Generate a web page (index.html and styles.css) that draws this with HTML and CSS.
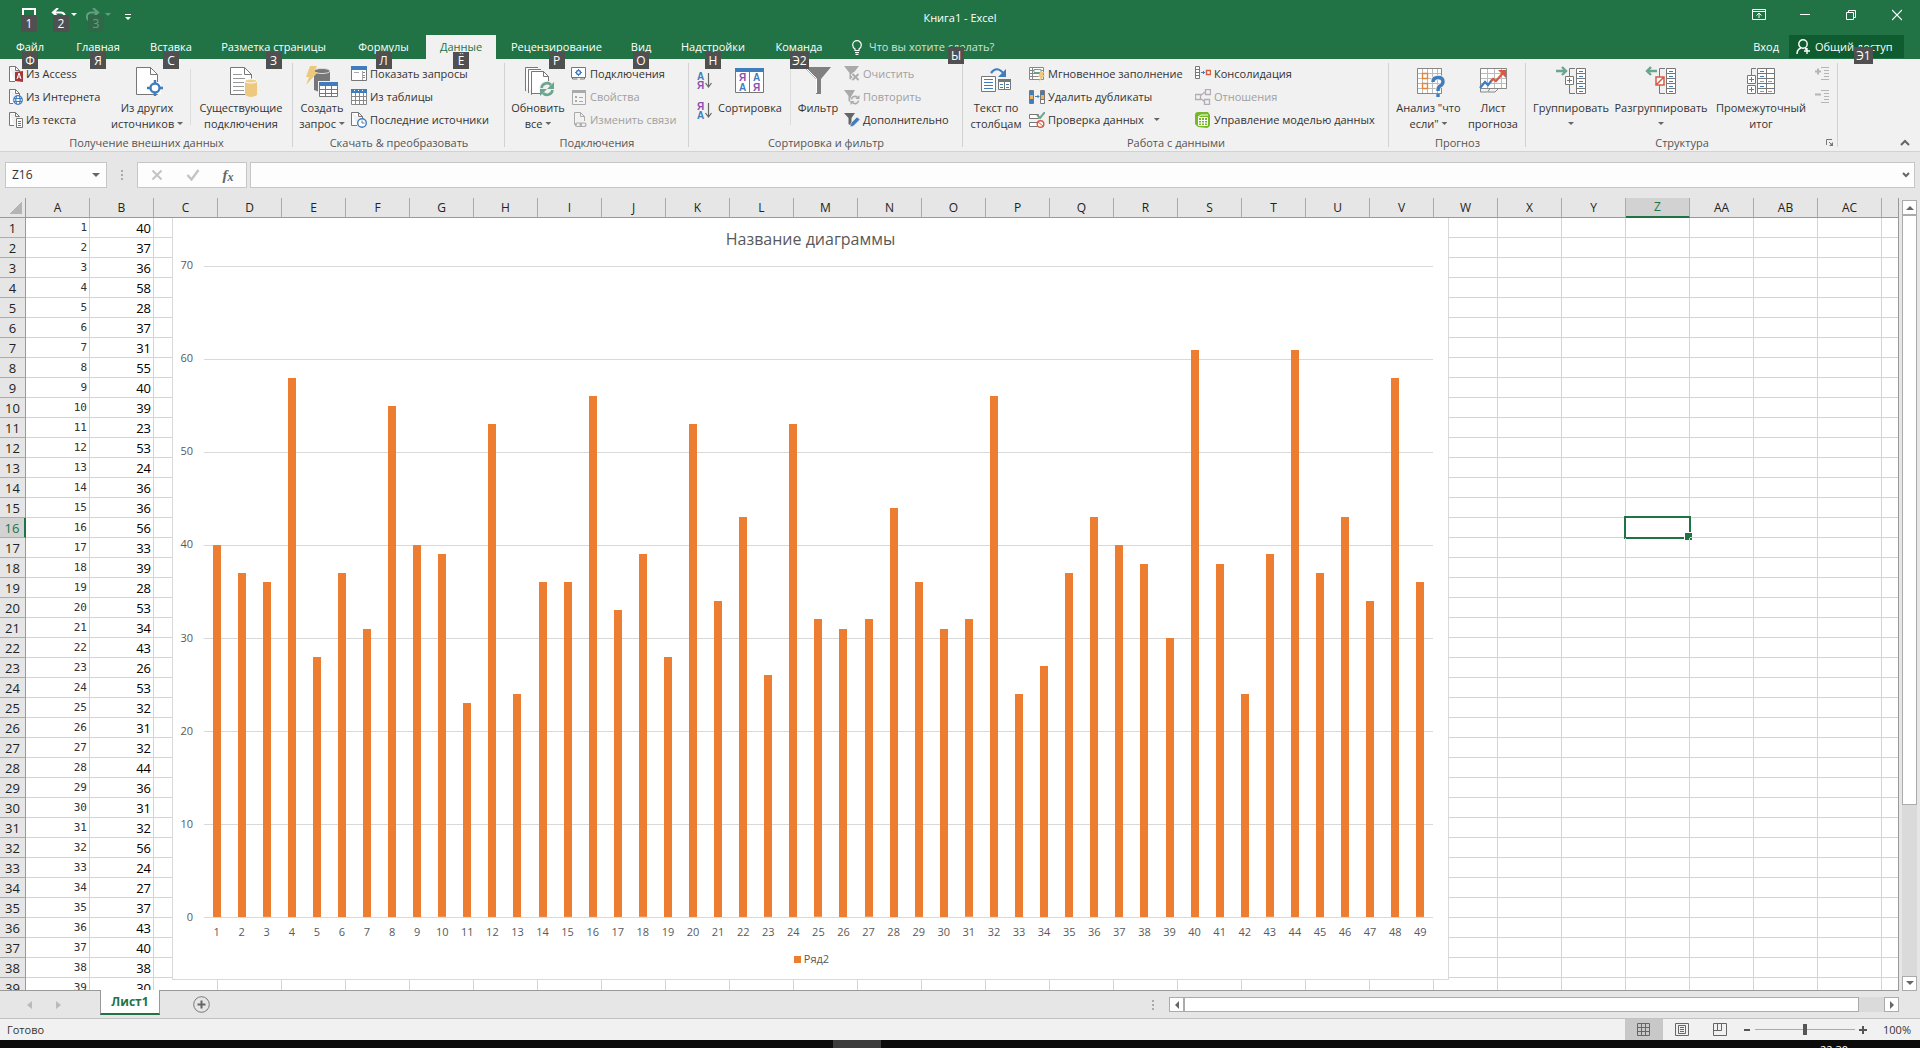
FILE: index.html
```html
<!DOCTYPE html>
<html lang="ru">
<head>
<meta charset="utf-8">
<title>Книга1 - Excel</title>
<link rel="stylesheet" href="styles.css">
</head>
<body>
<header class="titlebar">
  <div class="quick">
    <button class="quick-btn quick-save" aria-label="Сохранить"><svg width="16" height="16" viewBox="0 0 16 16"><path d="M2 1h12v13H2z" fill="none" stroke="#fff" stroke-width="2"/></svg><span class="tip">1</span></button>
    <button class="quick-btn quick-undo" aria-label="Отменить"><svg width="26" height="16" viewBox="0 0 26 16"><path d="M7 0L2 4.500l5 4.500M2 4.500h8q4 .5 4 5" fill="none" stroke="#fff" stroke-width="2.200"/><path d="M20 5h6l-3 3z" fill="#fff"/></svg><span class="tip">2</span></button>
    <button class="quick-btn quick-redo" disabled aria-label="Вернуть"><svg width="26" height="16" viewBox="0 0 26 16"><path d="M8 0l5 4.500L8 9M13 4.500H6q-4 .5-4 4t4 5" fill="none" stroke="#fff" stroke-width="2.200"/><path d="M20 5h6l-3 3z" fill="#fff"/></svg><span class="tip">3</span></button>
    <button class="quick-btn quick-more" aria-label="Настройка панели"><svg width="6" height="16" viewBox="0 0 6 16"><path d="M0 6h6v1H0zM0 9h6l-3 3z" fill="#fff"/></svg></button>
  </div>
  <h1 class="doc-title">Книга1 - Excel</h1>
  <div class="window-buttons">
    <button aria-label="Параметры ленты"><svg width="14" height="12" viewBox="0 0 14 12"><path d="M.5.500h13v10H.5zM.5 2.500h13M7 9V4.500M4.500 6.500L7 4l2.500 2.500" fill="none" stroke="#fff"/></svg></button>
    <button aria-label="Свернуть"><svg width="10" height="12" viewBox="0 0 10 12"><path d="M0 5.500h10" stroke="#fff"/></svg></button>
    <button aria-label="Восстановить"><svg width="10" height="12" viewBox="0 0 10 12"><path d="M.5 3.500h7v7h-7zM2.500 3V1.500h7v7H8" fill="none" stroke="#fff"/></svg></button>
    <button aria-label="Закрыть"><svg width="10" height="12" viewBox="0 0 10 12"><path d="M0 1l10 10M10 1L0 11" stroke="#fff" stroke-width="1.200"/></svg></button>
  </div>
</header>
<nav class="tabs">
  <div class="tab-list">
    <button class="tab tab-file">Файл<span class="tip">Ф</span></button>
    <button class="tab">Главная<span class="tip">Я</span></button>
    <button class="tab">Вставка<span class="tip">С</span></button>
    <button class="tab">Разметка страницы<span class="tip">З</span></button>
    <button class="tab">Формулы<span class="tip">Л</span></button>
    <button class="tab active">Данные<span class="tip">Ё</span></button>
    <button class="tab">Рецензирование<span class="tip">Р</span></button>
    <button class="tab">Вид<span class="tip">О</span></button>
    <button class="tab">Надстройки<span class="tip">Н</span></button>
    <button class="tab">Команда<span class="tip tip-wide">Э2</span></button>
  </div>
  <button class="tell-me"><svg width="10" height="15" viewBox="0 0 10 15"><path d="M3 10.500V9Q.7 7.500.7 5a4.300 4.300 0 0 1 8.600 0Q9.300 7.500 7 9v1.500zM3 12.500h4M3.500 14.300h3" fill="none" stroke="#fff" stroke-width="1.200"/></svg>Что вы хотите сделать?<span class="tip">Ы</span></button>
  <button class="sign-in">Вход</button>
  <button class="share"><svg width="15" height="16" viewBox="0 0 15 16"><circle cx="7" cy="5" r="4.200" fill="none" stroke="#fff" stroke-width="1.400"/><path d="M1 15q0-4.500 4-6M9 9.500q1 .5 1.500 1M11 9v6M8 12h6" fill="none" stroke="#fff" stroke-width="1.400"/></svg>Общий доступ<span class="tip tip-wide">Э1</span></button>
</nav>

<section class="ribbon">
  <div class="group g-external">
    <div class="tools">
      <div class="stack">
        <button class="small"><svg width="16" height="16" viewBox="0 0 16 16"><path d="M2.500.5h6l4 4V7M2.500.5v15H8" fill="#fff" stroke="#777"/><path d="M8.500.5v4h4" fill="none" stroke="#777"/><path d="M8 6l8-1v11l-8-1z" fill="#a4373a"/><path d="M10 13l2-6 2 6M10.600 11h3" fill="none" stroke="#fff"/></svg>Из Access</button>
        <button class="small"><svg width="16" height="16" viewBox="0 0 16 16"><path d="M2.500.5h6l4 4V7M2.500.5v14H6" fill="#fff" stroke="#777"/><path d="M8.500.5v4h4" fill="none" stroke="#777"/><g fill="#fff" stroke="#3f7dbd" stroke-width="1.200"><circle cx="11" cy="11" r="4.300"/><path d="M7 9.500h8M7 12.500h8M9.500 7q-1.500 4 0 8M12.500 7q1.500 4 0 8" fill="none"/></g></svg>Из Интернета</button>
        <button class="small"><svg width="16" height="16" viewBox="0 0 16 16"><path d="M2.500.5h6l4 4M2.500.5v13H7M8.500.5v4h4" fill="#fff" stroke="#777"/><path d="M9.500 6.500h6v9h-6zM11 9.500h3M11 11.500h3M11 13.500h3" fill="#fff" stroke="#777"/></svg>Из текста</button>
      </div>
      <button class="big"><svg width="32" height="32" viewBox="0 0 32 32"><path d="M5.500 1.500h14l7 7v20h-21z" fill="#fff" stroke="#777"/><path d="M19.500 1.500v7h7" fill="none" stroke="#777"/><path d="M18 16h12v12H18z" fill="#fff"/><circle cx="24" cy="22" r="4.500" fill="#fff" stroke="#3f7dbd" stroke-width="2.400"/><path d="M24 14v4M24 26v4M16 22h4M28 22h4" stroke="#3f7dbd" stroke-width="2.400"/></svg><span>Из других<br>источников <i class="arrow"></i></span></button>
      <hr class="rule">
      <button class="big"><svg width="32" height="32" viewBox="0 0 32 32"><path d="M5.500 1.500h14l7 7v20h-21z" fill="#fff" stroke="#777"/><path d="M19.500 1.500v7h7" fill="none" stroke="#777"/><path d="M8 8.500h9M8 12.500h12M8 16.500h11M8 20.500h11M8 24.500h11" stroke="#999"/><path d="M20 15v14q6 4 12 0V15z" fill="#edc87e"/><ellipse cx="26" cy="15" rx="6" ry="2" fill="#f1cf8b" stroke="#fff"/></svg><span>Существующие<br>подключения</span></button>
    </div>
    <h2>Получение внешних данных</h2>
  </div>

  <div class="group g-transform">
    <div class="tools">
      <button class="big"><svg width="32" height="32" viewBox="0 0 32 32"><path d="M8 5v19q8 4 16 0V5z" fill="#777"/><ellipse cx="16" cy="5" rx="8" ry="2.500" fill="#777" stroke="#ddd"/><path d="M4 0h7L8 6h4L0 19l3-8H0z" fill="#edc87e"/><path d="M12 15h20v17H12z" fill="#f0f0f0"/><path d="M13.500 19.500h18v11h-18zM19.500 19v11M25.500 19v11M13 23.500h18M13 27.500h18" fill="#fff" stroke="#777"/><path d="M13 16h19v4H13z" fill="#3f7dbd"/></svg><span>Создать<br>запрос <i class="arrow"></i></span></button>
      <div class="stack">
        <button class="small"><svg width="16" height="16" viewBox="0 0 16 16"><path d="M.5 1.500h15v13H.5z" fill="#fff" stroke="#777"/><path d="M0 0h16v4H0z" fill="#3f7dbd"/><path d="M3 6.500h5M11.500 5v9" stroke="#aaa"/><path d="M12 6.500h2M12 9.500h2M12 11.500h2" stroke="#888"/></svg>Показать запросы</button>
        <button class="small"><svg width="16" height="16" viewBox="0 0 16 16"><path d="M.5 3.500h15v12H.5zM4.500 3v12M8.500 3v12M12.500 3v12M0 7.500h16M0 11.500h16" fill="#fff" stroke="#888"/><path d="M0 0h16v4H0z" fill="#3f7dbd"/><path d="M3 1.500h1M7 1.500h1M11 1.500h1" stroke="#fff"/></svg>Из таблицы</button>
        <button class="small"><svg width="16" height="16" viewBox="0 0 16 16"><path d="M.5.500h7l4 4V8M.5.500v13H6M7.500.5v4h4" fill="#fff" stroke="#777"/><circle cx="11" cy="11" r="4.300" fill="#fff" stroke="#3f7dbd" stroke-width="1.400"/><path d="M11 8.500V11h2.500" fill="none" stroke="#777"/></svg>Последние источники</button>
      </div>
    </div>
    <h2>Скачать &amp; преобразовать</h2>
  </div>

  <div class="group g-connections">
    <div class="tools">
      <button class="big"><svg width="32" height="32" viewBox="0 0 32 32"><path d="M3.500 25V1.500H16M6.500 27V3.500H19M9.500 28.500v-23h12l5 5v17h-17z" fill="#fff" stroke="#777"/><path d="M21.500 5.500v5h5" fill="none" stroke="#777"/><circle cx="25" cy="23" r="8" fill="#f0f0f0"/><path d="M19.500 22a5.500 5.500 0 0 1 9.500-3M30.500 24a5.500 5.500 0 0 1-9.500 3" fill="none" stroke="#6ca58f" stroke-width="2.600"/><path d="M32 16v7h-7zM18 30v-7h7z" fill="#6ca58f"/></svg><span>Обновить<br>все <i class="arrow"></i></span></button>
      <div class="stack">
        <button class="small"><svg width="16" height="16" viewBox="0 0 16 16"><path d="M.5 1.500h14v10H.5zM1.500 11.500v1.500h5M9 13h4.500v-1.500" fill="#fff" stroke="#777"/><circle cx="7.500" cy="6.500" r="2" fill="none" stroke="#3f7dbd" stroke-width="1.400"/><path d="M7.500 3v1.500M7.500 8.500V10M4 6.500h1.500M9.500 6.500H11" stroke="#3f7dbd"/></svg>Подключения</button>
        <button class="small" disabled><svg width="16" height="16" viewBox="0 0 16 16"><path d="M1.500 1.500h13v14h-13z" fill="#f4f4f4" stroke="#aaa"/><path d="M1 1h14v3H1z" fill="#aaa"/><path d="M8 8.500h4M8 12.500h4" stroke="#aaa"/><path d="M4 7h2v2H4zM4 11h2v2H4z" fill="#aaa"/></svg>Свойства</button>
        <button class="small" disabled><svg width="16" height="16" viewBox="0 0 16 16"><path d="M3.500.5h6l4 4V9M3.500.5v12H6M9.500.5v4h4" fill="#f4f4f4" stroke="#aaa"/><g fill="none" stroke="#aaa" stroke-width="1.200"><rect x="4.500" y="11" width="6" height="3.500" rx="1.700"/><rect x="9" y="11" width="6" height="3.500" rx="1.700"/></g></svg>Изменить связи</button>
      </div>
    </div>
    <h2>Подключения</h2>
  </div>

  <div class="group g-sort">
    <div class="tools">
      <div class="sorters">
        <button aria-label="Сортировка от А до Я"><svg width="16" height="18" viewBox="0 0 16 18"><text x="0" y="8" class="ic-letter blue">А</text><text x="0" y="17" class="ic-letter purple">Я</text><path d="M11.500 1v13M8.500 11l3 4 3-4" fill="none" stroke="#666" stroke-width="1.200"/></svg></button>
        <button aria-label="Сортировка от Я до А"><svg width="16" height="18" viewBox="0 0 16 18"><text x="0" y="8" class="ic-letter purple">Я</text><text x="0" y="17" class="ic-letter blue">А</text><path d="M11.500 1v13M8.500 11l3 4 3-4" fill="none" stroke="#666" stroke-width="1.200"/></svg></button>
      </div>
      <button class="big"><svg width="32" height="32" viewBox="0 0 32 32"><path d="M1.500 3.500h28v23h-28zM15.500 6v20" fill="#fff" stroke="#777"/><path d="M1 2h29v4H1z" fill="#3f7dbd"/><text x="5" y="15" class="ic-letter purple">Я</text><text x="5" y="25" class="ic-letter blue">А</text><text x="19" y="15" class="ic-letter blue">А</text><text x="19" y="25" class="ic-letter purple">Я</text></svg><span>Сортировка</span></button>
      <hr class="rule">
      <button class="big"><svg width="32" height="32" viewBox="0 0 32 32"><path d="M2 1h27L19 13v15h-5V13z" fill="#808080"/><path d="M4.500 2.500l10 10V27" fill="none" stroke="#fff"/></svg><span>Фильтр</span></button>
      <div class="stack">
        <button class="small" disabled><svg width="16" height="16" viewBox="0 0 16 16"><path d="M0 0h15L9.500 7v8l-4-2V7z" fill="#aaa"/><path d="M8 7.500l7 7M15 7.500l-7 7" stroke="#f0f0f0" stroke-width="4"/><path d="M8.500 8l6 6M14.500 8l-6 6" stroke="#aaa" stroke-width="1.800"/></svg>Очистить</button>
        <button class="small" disabled><svg width="16" height="16" viewBox="0 0 16 16"><path d="M0 1h11L7.500 7v7l-3-2V7z" fill="#aaa"/><circle cx="11" cy="11" r="5" fill="#f0f0f0"/><path d="M7.500 10.500a3.500 3.500 0 0 1 6-2M14.500 11.500a3.500 3.500 0 0 1-6 2" fill="none" stroke="#aaa" stroke-width="1.600"/><path d="M15.500 6v4h-4zM6.500 16v-4h4z" fill="#aaa"/></svg>Повторить</button>
        <button class="small"><svg width="16" height="16" viewBox="0 0 16 16"><path d="M0 1h11L7.500 6v8l-3-2V6z" fill="#666"/><path d="M6 15l1-4 6-6 3 2.500-6.500 6.500z" fill="#3f7dbd" stroke="#f0f0f0" stroke-width=".6"/></svg>Дополнительно</button>
      </div>
    </div>
    <h2>Сортировка и фильтр</h2>
  </div>

  <div class="group g-data">
    <div class="tools">
      <button class="big"><svg width="32" height="32" viewBox="0 0 32 32"><path d="M1.500 10.500h14v15h-14z" fill="#fff" stroke="#777"/><path d="M4 13.500h9M4 16.500h9M4 19.500h9M4 22.500h9" stroke="#3f7dbd"/><path d="M18.500 13.500h12v10h-12zM24.500 16v7" fill="#fff" stroke="#777"/><path d="M18 13h13v3H18z" fill="#777"/><path d="M20 18.500h3M26 18.500h3M20 21.500h3M26 21.500h3" stroke="#3f7dbd"/><path d="M11 7q6-8 13 1" fill="none" stroke="#3f7dbd" stroke-width="2.200"/><path d="M26 3v8h-8z" fill="#3f7dbd"/></svg><span>Текст по<br>столбцам</span></button>
      <div class="stack">
        <button class="small"><svg width="16" height="16" viewBox="0 0 16 16"><path d="M.5 1.500h14v12H.5zM3.500 1v12M0 4.500h14M0 7.500h14M0 10.500h14" fill="#fff" stroke="#888"/><path d="M5 3.500h7v3H5z" fill="#fff" stroke="#6ca58f"/><path d="M11 6h4l-1 3h2l-6 7 1-5H9z" fill="#edc87e"/></svg>Мгновенное заполнение</button>
        <button class="small"><svg width="16" height="16" viewBox="0 0 16 16"><path d="M.5 1.500h4v13h-4zM11.500 1.500h4v13h-4zM11 10.500h4" fill="#fff" stroke="#777"/><path d="M1 2h3v4H1zM12 2h3v4h-3zM1 10h3v4H1z" fill="#3f7dbd"/><path d="M1 6h3v4H1zM12 6h3v4h-3z" fill="#edb265"/><path d="M6 7.500h4M8.500 6L10 7.500 8.500 9" fill="none" stroke="#3f7dbd"/></svg>Удалить дубликаты</button>
        <button class="small"><svg width="16" height="16" viewBox="0 0 16 16"><path d="M.5 2.500h9v4h-9zM.5 10.500h8v4h-8z" fill="#fff" stroke="#777"/><path d="M8 3l3 3 5-6" fill="none" stroke="#6ca58f" stroke-width="2"/><circle cx="11.500" cy="12" r="3.300" fill="#fff" stroke="#d75b41" stroke-width="1.400"/><path d="M9 10l5 4" stroke="#d75b41"/></svg>Проверка данных<i class="arrow arrow-far"></i></button>
      </div>
      <div class="stack">
        <button class="small"><svg width="16" height="16" viewBox="0 0 16 16"><path d="M.5.500h4v12h-4zM0 3.500h4M0 6.500h4M0 9.500h4" fill="#fff" stroke="#777"/><path d="M11.500 4.500h4v4h-4z" fill="#fff" stroke="#d75b41" stroke-width="1.400"/><path d="M6 6.500h4M8 5l1.500 1.500L8 8" fill="none" stroke="#3f7dbd"/></svg>Консолидация</button>
        <button class="small" disabled><svg width="16" height="16" viewBox="0 0 16 16"><path d="M5 7l5-4M5 9l5 4M.5 5.500h5v5h-5zM10.500.5h5v5h-5zM9.500 10.500h5v5h-5z" fill="#f4f0f4" stroke="#b5adb5" stroke-width="1.300"/></svg>Отношения</button>
        <button class="small"><svg width="16" height="16" viewBox="0 0 16 16"><path d="M0 3q0-3 3-3h10l2 3v10q0 2-3 3l-9-1-3-3z" fill="#76b82a"/><path d="M3.500 5.500h9v8h-9zM3 8.500h10M3 11h10M6.500 5v8M9.500 5v8M3 5l3-2h7" fill="none" stroke="#fff"/></svg>Управление моделью данных</button>
      </div>
    </div>
    <h2>Работа с данными</h2>
  </div>

  <div class="group g-forecast">
    <div class="tools">
      <button class="big"><svg width="32" height="32" viewBox="0 0 32 32"><path d="M4.500 2.500h24v25h-24zM9.500 2v25M14.500 2v25M19.500 2v25M24.500 2v25M4 7.500h24M4 12.500h24M4 17.500h24M4 22.500h24" fill="#fff" stroke="#bbb"/><path d="M4.500 2.500h24v25h-24z" fill="none" stroke="#888"/><path d="M9.500 7.500h5v5h-5zM9.500 17.500h5v5h-5z" fill="#fff" stroke="#e2873c" stroke-width="1.400"/><path d="M20 16q0-4.500 5-4.500t5 4q0 3-3 4.500-2 1-2 4" fill="none" stroke="#f0f0f0" stroke-width="5"/><path d="M20 16q0-4.500 5-4.500t5 4q0 3-3 4.500-2 1-2 5M25 28v3" fill="none" stroke="#3f7dbd" stroke-width="3.400"/></svg><span>Анализ "что<br>если" <i class="arrow"></i></span></button>
      <button class="big"><svg width="32" height="32" viewBox="0 0 32 32"><path d="M3.500 2.500h26v20h-26zM10.500 2v20M17.500 2v20M24.500 2v20M3 7.500h26M3 12.500h26M3 17.500h26" fill="#fff" stroke="#bbb"/><path d="M3.500 2.500h26v20h-26zM3.500 22v4h7l3-4M11 26h7l4-4" fill="none" stroke="#888"/><path d="M3 22l5-6 3 3 4-5" fill="none" stroke="#3f7dbd" stroke-width="2.200"/><path d="M14 15l2-2 3 2L26 7" fill="none" stroke="#d75b41" stroke-width="2.200"/><path d="M21 4h8v8z" fill="#d75b41"/></svg><span>Лист<br>прогноза</span></button>
    </div>
    <h2>Прогноз</h2>
  </div>

  <div class="group g-outline">
    <div class="tools">
      <button class="big"><svg width="32" height="32" viewBox="0 0 32 32"><path d="M21.500 2.500h9v25h-9zM21 7.500h9M21 12.500h9M21 17.500h9M21 22.500h9" fill="#fff" stroke="#777"/><path d="M24 5.500h4M24 10.500h4M24 15.500h4M24 20.500h4M24 25.500h4" stroke="#3f7dbd"/><path d="M20 2.500h-5.500v25H20" fill="none" stroke="#777"/><path d="M10.500 10.500h8v8h-8zM12 14.500h5M14.500 12v5" fill="#fff" stroke="#777"/><path d="M1 5h9M7 1l4 4-4 4" fill="none" stroke="#6ca58f" stroke-width="2.400"/></svg><span>Группировать<br><i class="arrow"></i></span></button>
      <button class="big"><svg width="32" height="32" viewBox="0 0 32 32"><path d="M21.500 2.500h9v25h-9zM21 7.500h9M21 12.500h9M21 17.500h9M21 22.500h9" fill="#fff" stroke="#777"/><path d="M24 5.500h4M24 10.500h4M24 15.500h4M24 20.500h4M24 25.500h4" stroke="#3f7dbd"/><path d="M20 2.500h-5.500v25H20" fill="none" stroke="#777"/><path d="M11 11h8v8h-8zM12 18l6-6" fill="#fff" stroke="#d75b41" stroke-width="1.500"/><path d="M12 5H3M6 1L2 5l4 4" fill="none" stroke="#6ca58f" stroke-width="2.400"/></svg><span>Разгруппировать<br><i class="arrow"></i></span></button>
      <button class="big"><svg width="32" height="32" viewBox="0 0 32 32"><path d="M12.500 2.500h17v25h-17zM21.500 2v25M12 7.500h17M12 12.500h17M12 17.500h17M12 22.500h17" fill="#fff" stroke="#777"/><path d="M15 5.500h4M15 10.500h4M15 20.500h4" stroke="#3f7dbd"/><path d="M15 15.500h4M23 15.500h4M15 25.500h4M23 25.500h4" stroke="#e2873c"/><path d="M11 2.500H6.500V10" fill="none" stroke="#777"/><path d="M2.500 9.500h8v8h-8zM4 13.500h5M6.500 11v5M2.500 19.500h8v8h-8zM4 23.500h5M6.500 21v5" fill="#fff" stroke="#777"/></svg><span>Промежуточный<br>итог</span></button>
      <div class="stack">
        <button class="small" disabled aria-label="Отобразить детали"><svg width="16" height="16" viewBox="0 0 16 16"><path d="M0 5.500h6M3 2.500v6" stroke="#b5b5b5" stroke-width="2"/><path d="M6 1.500h8M9 4.500h5M9 7.500h5M9 10.500h5M6 13.500h8" stroke="#b5b5b5"/></svg></button>
        <button class="small" disabled aria-label="Скрыть детали"><svg width="16" height="16" viewBox="0 0 16 16"><path d="M0 5.500h6" stroke="#b5b5b5" stroke-width="2"/><path d="M6 1.500h8M9 4.500h5M9 7.500h5M9 10.500h5M6 13.500h8" stroke="#b5b5b5"/></svg></button>
      </div>
    </div>
    <h2>Структура</h2>
    <button class="launcher" aria-label="Параметры структуры"><svg width="8" height="8" viewBox="0 0 8 8"><path d="M.5 6V.5H6M3 3l3 3" fill="none" stroke="#777"/><path d="M7 3v4H3z" fill="#777"/></svg></button>
  </div>
  <button class="collapse" aria-label="Свернуть ленту"><svg width="10" height="7" viewBox="0 0 10 7"><path d="M1 6l4-4 4 4" fill="none" stroke="#666" stroke-width="2"/></svg></button>
</section>

<section class="formula-bar">
  <div class="name-box"><input type="text" value="Z16" aria-label="Имя ячейки"><i class="arrow arrow-large"></i></div>
  <span class="dots"></span>
  <div class="fx">
    <button disabled aria-label="Отмена"><svg width="12" height="12" viewBox="0 0 12 12"><path d="M1.500 1.500l9 9M10.500 1.500l-9 9" stroke="#c4c4c4" stroke-width="2"/></svg></button>
    <button disabled aria-label="Ввод"><svg width="14" height="12" viewBox="0 0 14 12"><path d="M1.500 6l4 4.500L12.500 1" fill="none" stroke="#c4c4c4" stroke-width="2.400"/></svg></button>
    <button class="fx-btn" aria-label="Вставить функцию">f<sub>x</sub></button>
  </div>
  <div class="formula"><input type="text" aria-label="Строка формул"><svg width="8" height="6" viewBox="0 0 8 6"><path d="M1 1l3 3 3-3" fill="none" stroke="#666" stroke-width="2"/></svg></div>
</section>

<main class="workspace">
  <div class="sheet">
    <table class="cells">
      <thead><tr class="letters"></tr></thead>
      <tbody></tbody>
    </table>
    <figure class="chart">
      <figcaption>Название диаграммы</figcaption>
      <div class="plot">
        <div class="y-axis"></div>
        <div class="bars"></div>
        <div class="x-axis"></div>
      </div>
      <div class="legend"><i></i>Ряд2</div>
    </figure>
  </div>
  <div class="scroll-y">
    <button aria-label="Вверх"><svg width="8" height="5" viewBox="0 0 8 5"><path d="M0 5l4-4 4 4z" fill="#666"/></svg></button>
    <div class="track"><div class="thumb"></div></div>
    <button aria-label="Вниз"><svg width="8" height="5" viewBox="0 0 8 5"><path d="M0 0h8L4 4z" fill="#666"/></svg></button>
  </div>
</main>

<footer class="sheet-bar">
  <div class="sheet-nav">
    <button disabled aria-label="Предыдущий лист"><svg width="5" height="8" viewBox="0 0 5 8"><path d="M5 0v8L0 4z" fill="#bbb"/></svg></button>
    <button disabled aria-label="Следующий лист"><svg width="5" height="8" viewBox="0 0 5 8"><path d="M0 0v8l5-4z" fill="#bbb"/></svg></button>
  </div>
  <button class="sheet-tab">Лист1</button>
  <button class="add-sheet" aria-label="Новый лист"><svg width="17" height="17" viewBox="0 0 17 17"><circle cx="8.500" cy="8.500" r="7.800" fill="none" stroke="#777"/><path d="M8.500 4.500v8M4.500 8.500h8" stroke="#666" stroke-width="2"/></svg></button>
  <span class="dots"></span>
  <div class="scroll-x">
    <button aria-label="Влево"><svg width="4" height="8" viewBox="0 0 4 8"><path d="M4 0v8L0 4z" fill="#666"/></svg></button>
    <div class="track"><div class="thumb"></div></div>
    <button aria-label="Вправо"><svg width="4" height="8" viewBox="0 0 4 8"><path d="M0 0v8l4-4z" fill="#666"/></svg></button>
  </div>
</footer>
<div class="status">
  <span class="ready">Готово</span>
  <button class="view on" aria-label="Обычный"><svg width="14" height="14" viewBox="0 0 14 14"><path d="M.5.500h12v12H.5zM4.500.5v12M8.500.5v12M.5 4.500h12M.5 8.500h12" fill="none" stroke="#666"/></svg></button>
  <button class="view" aria-label="Разметка страницы"><svg width="14" height="14" viewBox="0 0 14 14"><path d="M.5.500h13v12H.5zM3.500 2.500h7v8h-7zM5 4.500h4M5 6.500h4M5 8.500h4" fill="none" stroke="#666"/></svg></button>
  <button class="view" aria-label="Страничный"><svg width="14" height="14" viewBox="0 0 14 14"><path d="M.5.500h13v12H.5zM4.500.5v7M8.500.5v7M.5 7.500h8" fill="none" stroke="#666"/></svg></button>
  <button class="zoom-btn" aria-label="Уменьшить"><svg width="8" height="8" viewBox="0 0 8 8"><path d="M1 4h6" stroke="#555" stroke-width="2"/></svg></button>
  <input class="zoom" type="range" min="0" max="100" value="50" aria-label="Масштаб">
  <button class="zoom-btn" aria-label="Увеличить"><svg width="8" height="8" viewBox="0 0 8 8"><path d="M0 4h8M4 0v8" stroke="#555" stroke-width="2"/></svg></button>
  <span class="percent">100%</span>
</div>
<div class="taskbar"><span class="task"></span><time>22:30</time></div>
<script src="script.js"></script>
</body>
</html>
```
FILE: script.js
```js
const values = [40, 37, 36, 58, 28, 37, 31, 55, 40, 39, 23, 53, 24, 36, 36, 56, 33, 39, 28, 53, 34, 43, 26, 53, 32,
  31, 32, 44, 36, 31, 32, 56, 24, 27, 37, 43, 40, 38, 30, 61, 38, 24, 39, 61, 37, 43, 34, 58, 36];
const COLUMNS = 30;
const ROWS = 39;
const AXIS_MAX = 70;

const letter = (i) => i < 26 ? String.fromCharCode(65 + i) : i < 29 ? 'A' + String.fromCharCode(39 + i) : '';

let head = '<td class="corner"></td>';
for (let c = 0; c < COLUMNS; c++) {
  head += `<th scope="col"${c === 25 ? ' class="current"' : ''}>${letter(c)}</th>`;
}
document.querySelector('.letters').innerHTML = head;

let body = '';
for (let r = 1; r <= ROWS; r++) {
  body += `<tr><th scope="row"${r === 16 ? ' class="current"' : ''}>${r}</th><td class="index">${r}</td><td>${values[r - 1]}</td>`;
  for (let c = 2; c < COLUMNS; c++) {
    body += r === 16 && c === 25 ? '<td class="selected"></td>' : '<td></td>';
  }
  body += '</tr>';
}
document.querySelector('.cells tbody').innerHTML = body;

let axis = '';
for (let v = AXIS_MAX; v >= 0; v -= 10) axis += `<span>${v}</span>`;
document.querySelector('.y-axis').innerHTML = axis;
document.querySelector('.bars').innerHTML = values.map((v) => `<i style="height:${v / AXIS_MAX * 100}%"></i>`).join('');
document.querySelector('.x-axis').innerHTML = values.map((v, i) => `<span>${i + 1}</span>`).join('');
```
FILE: styles.css
```css
* { box-sizing: border-box; }
body {
  margin: 0;
  height: 100vh;
  display: flex;
  flex-direction: column;
  overflow: hidden;
  background: #e6e6e6;
  color: #333;
  font: 11px/16px "Open Sans", "Noto Sans", sans-serif;
}
button {
  border: 0;
  padding: 0;
  margin: 0;
  background: none;
  color: inherit;
  font: inherit;
  white-space: nowrap;
}
input { font: inherit; color: inherit; }
svg { display: block; flex: none; }
h1, h2, hr, figure { margin: 0; }
h1, h2 { font: inherit; }

.tip {
  position: absolute;
  left: 50%;
  top: 17px;
  width: 16px;
  height: 17px;
  margin-left: -8px;
  background: #505050;
  color: #fff;
  text-align: center;
  font-size: 12px;
  line-height: 17px;
  z-index: 3;
}
.tip-wide { width: 19px; margin-left: -9px; }
.arrow {
  display: inline-block;
  width: 6px;
  height: 3px;
  background: #666;
  clip-path: polygon(0 0, 100% 0, 50% 100%);
  vertical-align: 3px;
}
.arrow-far { margin-left: 7px; }
.arrow-large { width: 8px; height: 4px; }
.dots {
  width: 2px;
  height: 10px;
  background: repeating-linear-gradient(#aaa 0 2px, transparent 2px 4px);
}

/* Title bar */
.titlebar {
  flex: none;
  height: 35px;
  display: grid;
  grid-template-columns: 1fr auto 1fr;
  background: #217346;
  color: #fff;
}
.quick { display: flex; padding: 8px 0 0 21px; }
.quick-btn { position: relative; height: 16px; }
.quick-btn .tip { left: 0; top: 7px; margin: 0; }
.quick-undo { margin-left: 14px; }
.quick-undo .tip { left: 2px; }
.quick-redo { margin-left: 8px; opacity: .3; }
.quick-redo .tip { left: 3px; }
.quick-more { margin-left: 14px; }
.doc-title { line-height: 35px; }
.window-buttons { display: flex; justify-content: flex-end; padding: 0 13px 5px 0; }
.window-buttons button { width: 20px; margin-left: 26px; display: grid; place-items: center; }

/* Ribbon tabs */
.tabs { flex: none; display: flex; height: 24px; background: #217346; color: #fff; }
.tab-list { display: grid; grid-template-columns: 60px 76px 70px 135px 85px 70px 121px 48px 96px 76px; }
.tab { position: relative; line-height: 24px; }
.tab.active { background: #f1f1f1; color: #217346; }
.tell-me {
  position: relative;
  display: flex;
  align-items: center;
  gap: 7px;
  margin-left: 15px;
  color: #cfe3d7;
}
.tell-me .tip { left: 96px; top: 12px; margin: 0; }
.sign-in { margin-left: auto; }
.share {
  position: relative;
  display: flex;
  align-items: center;
  gap: 4px;
  width: 115px;
  height: 23px;
  margin: 0 16px 0 10px;
  padding-left: 7px;
  background: #0e5c2f;
}
.share .tip { left: 65px; top: 12px; margin: 0; }

/* Ribbon */
.ribbon {
  flex: none;
  display: flex;
  height: 93px;
  background: #f1f1f1;
  border-bottom: 1px solid #d2d2d2;
}
.group {
  position: relative;
  display: flex;
  flex-direction: column;
  justify-content: space-between;
}
.group::after {
  content: "";
  position: absolute;
  right: 0;
  top: 4px;
  bottom: 4px;
  width: 1px;
  background: #d2d2d2;
}
.tools { display: grid; justify-content: start; align-items: start; padding-top: 3px; }
.group h2 { color: #555; text-align: center; }
.stack { display: grid; grid-auto-rows: 23px; justify-items: start; }
.small { display: flex; align-items: center; gap: 3px; }
button:disabled { color: #a0a0a0; }
.big {
  display: flex;
  flex-direction: column;
  align-items: center;
  gap: 2px;
  padding-top: 4px;
}
.rule { width: 1px; height: 56px; border: 0; background: #dcdcdc; justify-self: center; margin-top: 7px; }
.g-external { width: 293px; }
.g-external .tools { padding-left: 7px; grid-template-columns: 101px 78px 9px 92px; }
.g-transform { width: 212px; }
.g-transform .tools { padding-left: 5px; grid-template-columns: 48px 140px; column-gap: 5px; }
.g-connections { width: 184px; }
.g-connections .tools { padding-left: 6px; grid-template-columns: 54px 110px; column-gap: 6px; }
.g-sort { width: 274px; }
.g-sort .tools { padding-left: 8px; grid-template-columns: 18px 70px 10px 46px 110px; }
.g-sort .stack { padding-left: 3px; }
.g-data { width: 426px; }
.g-data .tools { padding-left: 6px; grid-template-columns: 54px 160px 190px; column-gap: 6px; }
.g-forecast { width: 137px; }
.g-forecast .tools { padding-left: 5px; grid-template-columns: 69px 60px; }
.g-outline { width: 312px; }
.g-outline .tools { padding-left: 5px; grid-template-columns: 80px 98px 100px 20px; column-gap: 1px; }
.g-outline .stack { padding-left: 3px; }
.sorters { display: grid; gap: 12px; padding-top: 10px; }
.ic-letter { font: bold 10px "Liberation Sans", sans-serif; }
.blue { fill: #3f7dbd; }
.purple { fill: #8a4fae; }
.launcher { position: absolute; right: 4px; bottom: 4px; }
.collapse { margin: auto 10px 5px auto; }

/* Formula bar */
.formula-bar { flex: none; display: flex; align-items: center; height: 46px; padding: 0 5px; }
.name-box, .fx, .formula {
  display: flex;
  align-items: center;
  height: 26px;
  background: #fdfdfd;
  border: 1px solid #c6c6c6;
}
.name-box { width: 102px; padding: 0 6px; font-size: 12px; }
.name-box input { width: 80px; padding: 0; border: 0; background: none; outline: 0; }
.formula-bar .dots { margin: 0 14px; }
.fx { width: 110px; justify-content: space-around; padding: 0 1px; }
.fx-btn { font: italic bold 15px/16px "Liberation Serif", serif; color: #666; }
.fx-btn sub { font-size: 12px; line-height: 0; vertical-align: -1px; }
.formula { flex: 1; margin-left: 3px; padding-right: 4px; }
.formula input { flex: 1; border: 0; background: none; outline: 0; }

/* Sheet */
.workspace { flex: 1; min-height: 0; display: flex; }
.sheet {
  position: relative;
  flex: 1;
  min-width: 0;
  overflow: hidden;
  border-right: 1px solid #999;
  border-bottom: 1px solid #999;
}
.cells { width: 1946px; table-layout: fixed; border-collapse: separate; border-spacing: 0; background: #fff; color: #000; }
.cells th, .cells td { width: 64px; height: 20px; padding: 0; font-size: 13px; line-height: 18px; font-weight: normal; }
.cells td {
  position: relative;
  border-right: 1px solid #d4d4d4;
  border-bottom: 1px solid #d4d4d4;
  text-align: right;
  padding-right: 2px;
}
.cells .index { color: #333; font-family: "DejaVu Sans Mono", monospace; font-size: 11px; }
.cells th { background: #e6e6e6; border-right: 1px solid #ababab; border-bottom: 1px solid #999; color: #222; }
.cells thead th { font-size: 12px; }
.cells tbody th { width: 26px; border-right-color: #999; border-bottom-color: #ababab; }
.cells .corner {
  width: 26px;
  border-color: #999;
  background: linear-gradient(135deg, transparent 50%, #b4b4b4 50%) 10px 4px / 12px 12px no-repeat #e6e6e6;
}
.cells th.current { background: #d2d2d2; color: #217346; }
.cells thead .current { border-bottom: 2px solid #217346; }
.cells tbody .current { border-right: 2px solid #217346; }
.selected::before {
  content: "";
  position: absolute;
  inset: -2px -2px -2px -2px;
  border: 2px solid #217346;
}
.selected::after {
  content: "";
  position: absolute;
  right: -4px;
  bottom: -4px;
  width: 7px;
  height: 7px;
  background: #217346;
  border: 1px solid #fff;
}

/* Chart, floating over the cells */
.chart {
  position: absolute;
  left: 172px;
  top: 20px;
  width: 1277px;
  height: 762px;
  background: #fff;
  border: 1px solid #d9d9d9;
  border-top: 0;
  color: #595959;
}
.chart figcaption { padding-top: 9px; text-align: center; font-size: 16px; line-height: 24px; }
.plot {
  display: grid;
  grid-template-columns: 20px 1fr;
  grid-template-rows: 652px 28px;
  column-gap: 11px;
  padding: 15px 15px 0 0;
}
.y-axis { display: flex; flex-direction: column; justify-content: space-between; margin: -9px 0 -7px; text-align: right; }
.bars {
  display: flex;
  background: repeating-linear-gradient(#d9d9d9 0 1px, transparent 1px 93px);
  padding-bottom: 1px;
  align-items: flex-end;
}
.bars i { flex: 1; background: linear-gradient(#ed7d31, #ed7d31) center / 8px 100% no-repeat; }
.x-axis { grid-column: 2; display: flex; padding-top: 6px; }
.x-axis span { flex: 1; width: 0; text-align: center; }
.legend { display: flex; justify-content: center; align-items: center; gap: 3px; line-height: 20px; padding: 3px 0 0 2px; }
.legend i { width: 7px; height: 7px; background: #ed7d31; }

/* Scroll bars */
.scroll-y { width: 15px; margin: 2px 3px 0 3px; display: flex; flex-direction: column; }
.scroll-y button, .scroll-x button {
  flex: none;
  width: 15px;
  height: 15px;
  display: grid;
  place-items: center;
  background: #fff;
  border: 1px solid #ababab;
}
.track { flex: 1; background: #dadada; }
.thumb { background: #fff; border: 1px solid #ababab; }
.scroll-y .thumb { height: 77.500%; }
.scroll-x { display: flex; width: 730px; }
.scroll-x .thumb { height: 15px; width: 96.400%; }

/* Sheet tabs */
.sheet-bar { flex: none; display: flex; align-items: center; height: 27px; padding-right: 21px; }
.sheet-nav { display: flex; gap: 24px; width: 100px; padding-left: 27px; }
.sheet-tab {
  align-self: flex-start;
  position: relative;
  width: 60px;
  height: 25px;
  margin-top: -1px;
  background: #fff;
  border: 1px solid #999;
  border-top: 0;
  border-bottom: 2px solid #217346;
  color: #217346;
  font-weight: bold;
  font-size: 12px;
}
.add-sheet { margin-left: 33px; }
.sheet-bar .dots { margin: 0 15px 0 auto; }

/* Status bar */
.status {
  flex: none;
  display: flex;
  align-items: center;
  height: 22px;
  padding: 0 9px 0 7px;
  background: #f1f1f1;
  border-top: 1px solid #c1c1c1;
}
.ready { margin-right: auto; }
.view { width: 38px; height: 21px; display: grid; place-items: center; }
.view.on { background: #c8c8c8; }
.zoom-btn { margin: 0 4px; }
.zoom {
  appearance: none;
  width: 100px;
  height: 12px;
  margin: 0;
  background: linear-gradient(#aaa, #aaa) center / 100% 1px no-repeat;
}
.zoom::-webkit-slider-thumb { appearance: none; width: 4px; height: 11px; background: #555; }
.percent { margin-left: 12px; }

/* Task bar, cut off by the screen edge */
.taskbar { flex: none; display: flex; justify-content: space-between; height: 8px; padding: 0 72px 0 833px; overflow: hidden; background: #0b0b0b; color: #fff; }
.task { width: 48px; background: #3c3c3c; }
.taskbar time { line-height: 20px; }
```
